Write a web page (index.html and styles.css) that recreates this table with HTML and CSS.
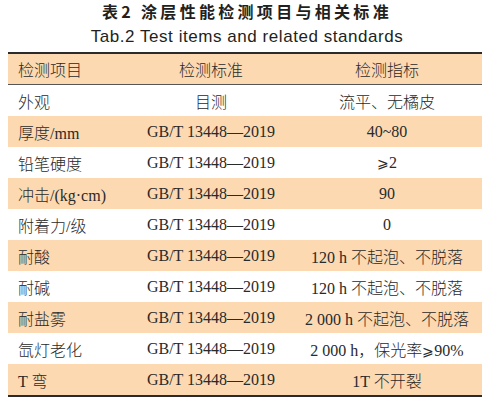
FILE: index.html
```html
<!DOCTYPE html>
<html lang="zh-CN">
<head>
    <meta charset="UTF-8">
    <title>表2 涂层性能检测项目与相关标准</title>
    <link rel="stylesheet" href="styles.css">
</head>
<body>
    <div class="caption">
        <div class="title-cn">表2 涂层性能检测项目与相关标准</div>
        <div class="title-en">Tab.2 Test items and related standards</div>
    </div>
    <table class="spec-table">
        <thead>
            <tr>
                <th class="item">检测项目</th>
                <th>检测标准</th>
                <th>检测指标</th>
            </tr>
        </thead>
        <tbody>
            <tr>
                <td class="item">外观</td>
                <td>目测</td>
                <td>流平、无橘皮</td>
            </tr>
            <tr class="shade">
                <td class="item">厚度/mm</td>
                <td>GB/T 13448—2019</td>
                <td>40~80</td>
            </tr>
            <tr>
                <td class="item">铅笔硬度</td>
                <td>GB/T 13448—2019</td>
                <td><span class="ge">⩾</span>2</td>
            </tr>
            <tr class="shade">
                <td class="item">冲击/(kg·cm)</td>
                <td>GB/T 13448—2019</td>
                <td>90</td>
            </tr>
            <tr>
                <td class="item">附着力/级</td>
                <td>GB/T 13448—2019</td>
                <td>0</td>
            </tr>
            <tr class="shade">
                <td class="item">耐酸</td>
                <td>GB/T 13448—2019</td>
                <td>120 h 不起泡、不脱落</td>
            </tr>
            <tr>
                <td class="item">耐碱</td>
                <td>GB/T 13448—2019</td>
                <td>120 h 不起泡、不脱落</td>
            </tr>
            <tr class="shade">
                <td class="item">耐盐雾</td>
                <td>GB/T 13448—2019</td>
                <td>2 000 h 不起泡、不脱落</td>
            </tr>
            <tr>
                <td class="item">氙灯老化</td>
                <td>GB/T 13448—2019</td>
                <td>2 000 h，保光率<span class="ge">⩾</span>90%</td>
            </tr>
            <tr class="shade">
                <td class="item">T 弯</td>
                <td>GB/T 13448—2019</td>
                <td>1T 不开裂</td>
            </tr>
        </tbody>
    </table>
</body>
</html>
```

FILE: styles.css
```css
body {
    margin: 0;
    background-color: #fff;
    color: #231f20;
}
.caption {
    text-align: center;
    padding-top: 1px;
    height: 51px;
}
.title-cn {
    font-family: "Noto Sans CJK SC", sans-serif;
    font-weight: bold;
    font-size: 16px;
    line-height: 20px;
    letter-spacing: 3.3px;
}
.title-en {
    font-family: "Liberation Sans", Arial, sans-serif;
    font-size: 17px;
    line-height: 24px;
    letter-spacing: 0.55px;
    margin-top: 4px;
}
.spec-table {
    margin-left: 8px;
    width: 474px;
    border-collapse: collapse;
    border-top: 2px solid #2b2b2b;
    border-bottom: 2px solid #2b2b2b;
    font-family: "Liberation Serif", "Noto Sans CJK SC", serif;
    font-size: 16px;
    font-weight: 300;
    color: #2a2a2a;
}
.spec-table th {
    font-weight: 300;
    height: 30px;
    padding: 0;
    background-color: #fcd9b1;
    border-bottom: 1px solid #555;
}
.spec-table td {
    height: 31px;
    padding: 0;
    text-align: center;
}
.spec-table th.item,
.spec-table td.item {
    width: 112px;
    text-align: left;
    padding-left: 10px;
}
.spec-table th:nth-child(2) {
    width: 162px;
}
.spec-table tr.shade td {
    background-color: #fcd9b1;
}
.ge {
    font-family: "DejaVu Sans", serif;
    font-size: 14px;
}
```
